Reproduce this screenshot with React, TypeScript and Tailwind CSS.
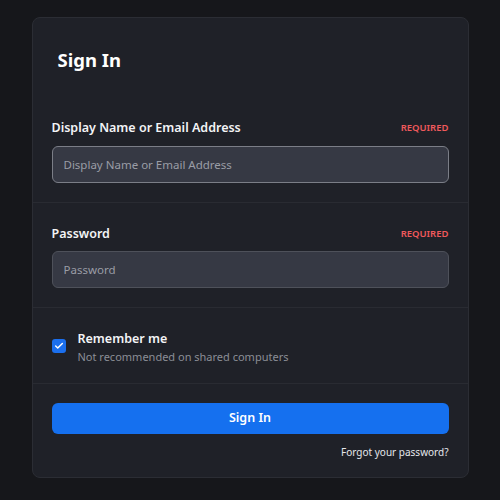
import { Check } from "lucide-react";

const font = { fontFamily: '"Noto Sans", "Open Sans", Arial, sans-serif' };

function Field({ label, placeholder, type, focused }: { label: string; placeholder: string; type: string; focused?: boolean }) {
  return (
    <div className="px-[19px] pt-[22px] pb-[19px]">
      <div className="flex items-center justify-between">
        <label className="text-[12.5px] font-semibold text-[#f3f4f6]">{label}</label>
        <span className="text-[9.5px] font-semibold uppercase text-[#f0595c]">Required</span>
      </div>
      <input
        type={type}
        placeholder={placeholder}
        className={`mt-[8px] h-[37px] w-full rounded-[6px] border bg-[#363944] px-[11px] text-[11.5px] text-white placeholder:text-[#9a9da6] outline-none ${
          focused ? "border-[#7b7e87]" : "border-[#4e515a]"
        }`}
      />
    </div>
  );
}

export default function App() {
  return (
    <div className="min-h-[500px] bg-[#16171b] pt-[17px]" style={font}>
      <div className="mx-auto w-[437px] h-[461px] rounded-[8px] border border-[#2b2d34] bg-[#1f2128]">
        <div className="px-[25px] pt-[28px] pb-[23px]">
          <h1 className="text-[18.5px] font-bold text-white">Sign In</h1>
        </div>

        <Field label="Display Name or Email Address" placeholder="Display Name or Email Address" type="text" focused />
        <div className="border-t border-[#292b32]">
          <Field label="Password" placeholder="Password" type="password" />
        </div>

        <div className="flex items-start gap-[12px] border-y border-[#292b32] px-[19px] pt-[22px] pb-[18px]">
          <div className="mt-[9px] flex h-[14px] w-[14px] items-center justify-center rounded-[3px] bg-[#1b6fee]">
            <Check className="h-[10px] w-[10px] text-white" strokeWidth={3.5} />
          </div>
          <div className="flex flex-col">
            <span className="text-[12.5px] font-semibold leading-[18px] text-[#f3f4f6]">Remember me</span>
            <span className="text-[11px] leading-[17px] text-[#8b8e96]">Not recommended on shared computers</span>
          </div>
        </div>

        <div className="px-[19px] pt-[19px]">
          <button className="h-[31px] w-full rounded-[6px] bg-[#1570ef] text-[12.5px] font-semibold text-white">
            Sign In
          </button>
          <div className="mt-[4px] text-right">
            <a className="text-[10px] text-[#e5e7eb]">Forgot your password?</a>
          </div>
        </div>
      </div>
    </div>
  );
}
